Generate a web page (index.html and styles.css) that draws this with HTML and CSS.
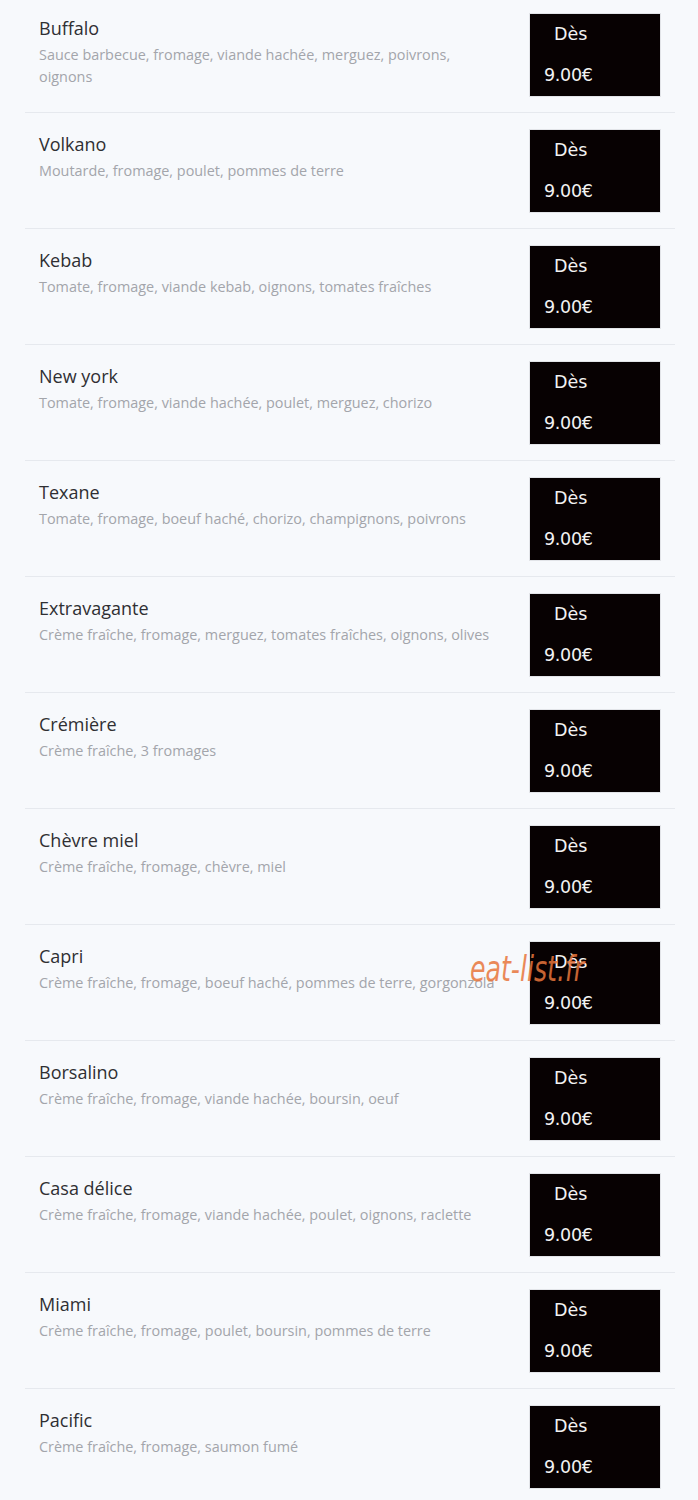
FILE: index.html
```html
<!DOCTYPE html>
<html lang="fr">
<head>
    <meta charset="UTF-8">
    <meta name="viewport" content="width=device-width, initial-scale=1.0">
    <title>Pizzas</title>
    <link rel="stylesheet" href="styles.css">
</head>
<body>
    <div class="menu">
        <div class="item">
            <div class="info">
                <div class="name">Buffalo</div>
                <div class="desc">Sauce barbecue, fromage, viande hachée, merguez, poivrons, oignons</div>
            </div>
            <div class="price"><span class="from">Dès</span><span class="amount">9.00€</span></div>
        </div>
        <div class="item">
            <div class="info">
                <div class="name">Volkano</div>
                <div class="desc">Moutarde, fromage, poulet, pommes de terre</div>
            </div>
            <div class="price"><span class="from">Dès</span><span class="amount">9.00€</span></div>
        </div>
        <div class="item">
            <div class="info">
                <div class="name">Kebab</div>
                <div class="desc">Tomate, fromage, viande kebab, oignons, tomates fraîches</div>
            </div>
            <div class="price"><span class="from">Dès</span><span class="amount">9.00€</span></div>
        </div>
        <div class="item">
            <div class="info">
                <div class="name">New york</div>
                <div class="desc">Tomate, fromage, viande hachée, poulet, merguez, chorizo</div>
            </div>
            <div class="price"><span class="from">Dès</span><span class="amount">9.00€</span></div>
        </div>
        <div class="item">
            <div class="info">
                <div class="name">Texane</div>
                <div class="desc">Tomate, fromage, boeuf haché, chorizo, champignons, poivrons</div>
            </div>
            <div class="price"><span class="from">Dès</span><span class="amount">9.00€</span></div>
        </div>
        <div class="item">
            <div class="info">
                <div class="name">Extravagante</div>
                <div class="desc">Crème fraîche, fromage, merguez, tomates fraîches, oignons, olives</div>
            </div>
            <div class="price"><span class="from">Dès</span><span class="amount">9.00€</span></div>
        </div>
        <div class="item">
            <div class="info">
                <div class="name">Crémière</div>
                <div class="desc">Crème fraîche, 3 fromages</div>
            </div>
            <div class="price"><span class="from">Dès</span><span class="amount">9.00€</span></div>
        </div>
        <div class="item">
            <div class="info">
                <div class="name">Chèvre miel</div>
                <div class="desc">Crème fraîche, fromage, chèvre, miel</div>
            </div>
            <div class="price"><span class="from">Dès</span><span class="amount">9.00€</span></div>
        </div>
        <div class="item">
            <div class="info">
                <div class="name">Capri</div>
                <div class="desc">Crème fraîche, fromage, boeuf haché, pommes de terre, gorgonzola</div>
            </div>
            <div class="price"><span class="from">Dès</span><span class="amount">9.00€</span></div>
            <div class="watermark">eat-list.fr</div>
        </div>
        <div class="item">
            <div class="info">
                <div class="name">Borsalino</div>
                <div class="desc">Crème fraîche, fromage, viande hachée, boursin, oeuf</div>
            </div>
            <div class="price"><span class="from">Dès</span><span class="amount">9.00€</span></div>
        </div>
        <div class="item">
            <div class="info">
                <div class="name">Casa délice</div>
                <div class="desc">Crème fraîche, fromage, viande hachée, poulet, oignons, raclette</div>
            </div>
            <div class="price"><span class="from">Dès</span><span class="amount">9.00€</span></div>
        </div>
        <div class="item">
            <div class="info">
                <div class="name">Miami</div>
                <div class="desc">Crème fraîche, fromage, poulet, boursin, pommes de terre</div>
            </div>
            <div class="price"><span class="from">Dès</span><span class="amount">9.00€</span></div>
        </div>
        <div class="item">
            <div class="info">
                <div class="name">Pacific</div>
                <div class="desc">Crème fraîche, fromage, saumon fumé</div>
            </div>
            <div class="price"><span class="from">Dès</span><span class="amount">9.00€</span></div>
        </div>
    </div>
</body>
</html>
```

FILE: styles.css
```css
body {
    margin: 0;
    background: #f7f9fc;
    font-family: "Open Sans", "Noto Sans", sans-serif;
    color: #333;
}

.menu {
    padding: 0 23px 0 25px;
}

.item {
    position: relative;
    display: flex;
    justify-content: space-between;
    align-items: flex-start;
    padding: 17px 15px 16px 14px;
    border-bottom: 1px solid #e6e9ee;
}

.item:first-child {
    padding-top: 14px;
}

.item:last-child {
    border-bottom: none;
}

.info {
    width: 462px;
}

.name {
    font-size: 18px;
    line-height: 28px;
    color: #2f2f33;
}

.desc {
    margin-top: 2px;
    font-size: 14.4px;
    line-height: 22px;
    color: #a3a5ab;
}

.price {
    display: flex;
    flex-direction: column;
    width: 130px;
    height: 82px;
    box-sizing: border-box;
    padding: 8px 0 0 14px;
    background: #070102;
    outline: 1px solid #e2e4e8;
    color: #f2f2f2;
    font-family: "DejaVu Sans", sans-serif;
    font-size: 17.5px;
    line-height: 24px;
}

.from {
    padding-left: 10px;
}

.amount {
    margin-top: 17px;
    letter-spacing: -0.3px;
}

.watermark {
    position: absolute;
    left: 445px;
    top: 23px;
    color: #e8763c;
    opacity: 0.85;
    font-family: "DejaVu Sans", sans-serif;
    font-style: italic;
    font-size: 36px;
    transform: scaleX(0.7);
    transform-origin: left top;
}
```
